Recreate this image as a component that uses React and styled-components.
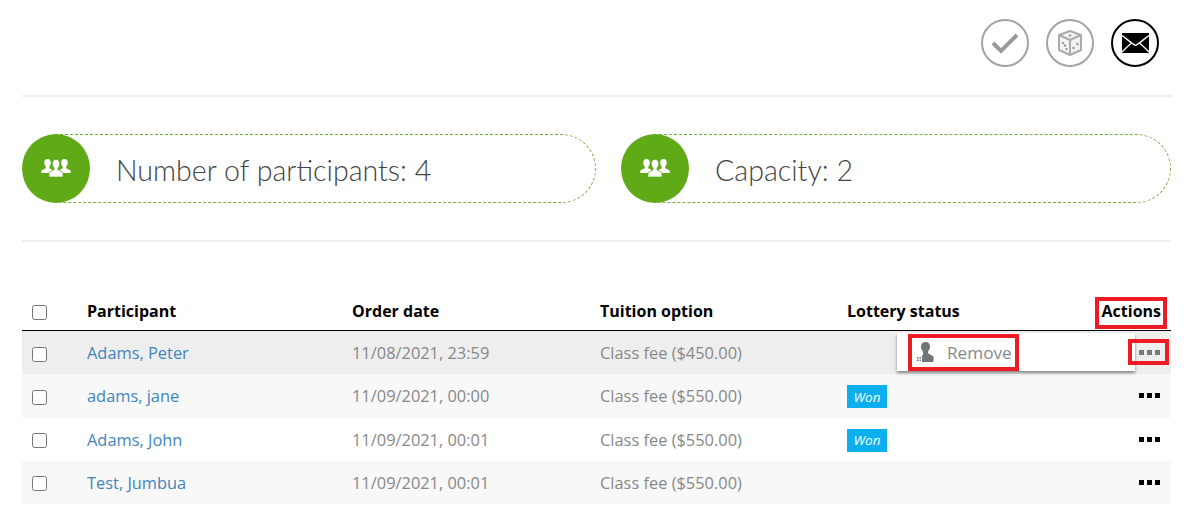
import React from "react";
import styled, { createGlobalStyle } from "styled-components";

const GlobalStyle = createGlobalStyle`
  html, body {
    margin: 0;
    background: #fff;
    font-family: "Open Sans", "Noto Sans", sans-serif;
  }
`;

const rows = [
  { name: "Adams, Peter", date: "11/08/2021, 23:59", fee: "Class fee ($450.00)", active: true },
  { name: "adams, jane", date: "11/09/2021, 00:00", fee: "Class fee ($550.00)", won: true },
  { name: "Adams, John", date: "11/09/2021, 00:01", fee: "Class fee ($550.00)", won: true },
  { name: "Test, Jumbua", date: "11/09/2021, 00:01", fee: "Class fee ($550.00)" },
];

const PeopleIcon = () => (
  <svg width="30" height="19" viewBox="0 0 30 19" fill="#fff">
    <path d="M6.500 0c2.300 0 3.300 1.600 3.300 3.800 0 1.500-.6 3-1.500 3.800v1.600l3 1.600V14H.3v-2.400l4.500-2.400V7.600C3.900 6.800 3.300 5.300 3.300 3.800 3.300 1.600 4.200 0 6.500 0z" />
    <path d="M23.500 0c-2.300 0-3.300 1.600-3.300 3.800 0 1.500.6 3 1.500 3.800v1.600l-3 1.600V14h11v-2.400l-4.500-2.400V7.600c.9-.8 1.500-2.300 1.500-3.800C26.700 1.600 25.800 0 23.500 0z" />
    <path d="M15 .5c2.500 0 3.700 1.800 3.700 4.200 0 1.700-.7 3.300-1.700 4.100v2l5 2.700V18H8v-4.500l5-2.700v-2c-1-.8-1.700-2.400-1.700-4.100C11.300 2.300 12.500.5 15 .5z" stroke="#60a917" strokeWidth=".7" />
  </svg>
);

const CheckIcon = () => (
  <svg width="28" height="22" viewBox="0 0 28 22" fill="none" stroke="#999" strokeWidth="4">
    <path d="M2 11l8 8L26 3" />
  </svg>
);

const DiceIcon = () => (
  <svg width="26" height="28" viewBox="0 0 26 28" fill="#fff" stroke="#aaa" strokeWidth="2" strokeLinejoin="round">
    <path d="M13 2l11 4v15l-11 5-11-5V6z" fill="#f3f3f3" />
    <path d="M2 6l11 5 11-5M13 11v15" fill="none" />
    <g fill="#999" stroke="none">
      <circle cx="13" cy="6.500" r="1.300" />
      <circle cx="6" cy="14" r="1.200" />
      <circle cx="9.500" cy="20" r="1.200" />
      <circle cx="8" cy="16.500" r="1.200" />
      <circle cx="16.500" cy="19" r="1.200" />
      <circle cx="20.500" cy="15" r="1.200" />
    </g>
  </svg>
);

const MailIcon = () => (
  <svg width="27" height="20" viewBox="0 0 27 20">
    <rect width="27" height="20" fill="#000" />
    <path d="M0 2.500C5 6 9 10 13.500 12.500 18 10 22 6 27 2.500M0 19c3-3 6-6 9-8.500M27 19c-3-3-6-6-9-8.500" fill="none" stroke="#fff" strokeWidth="1.400" />
  </svg>
);

const RemoveIcon = () => (
  <svg width="18" height="20" viewBox="0 0 18 20" fill="#6f7578">
    <path d="M9.500 0c3 0 4.500 2 4.500 4.800 0 2-1 3.700-2 4.700v1.700l5.500 3.300V20H3v-4.500l4-2.600V9.500C6 8.500 5 6.800 5 4.800 5 2 6.500 0 9.500 0z" />
    <rect x="0" y="14" width="6" height="6" fill="#fff" />
    <path d="M1 15h1.500v1.500H1zM3.500 15H5v1.500H3.500zM1 17.500h1.500V19H1zM3.500 17.500H5V19H3.500z" />
  </svg>
);

const App = () => (
  <Page>
    <GlobalStyle />
    <Toolbar>
      <RoundButton><CheckIcon /></RoundButton>
      <RoundButton><DiceIcon /></RoundButton>
      <RoundButton $active><MailIcon /></RoundButton>
    </Toolbar>

    <Stats>
      <Stat>
        <StatBadge><PeopleIcon /></StatBadge>
        <StatLabel>Number of participants: 4</StatLabel>
      </Stat>
      <Stat>
        <StatBadge><PeopleIcon /></StatBadge>
        <StatLabel>Capacity: 2</StatLabel>
      </Stat>
    </Stats>

    <Table>
      <HeadRow>
        <CheckCell><Box type="checkbox" /></CheckCell>
        <span>Participant</span>
        <span>Order date</span>
        <span>Tuition option</span>
        <span>Lottery status</span>
        <ActionsCell>
          <Marked $inset="-3px -6px -7px -7px">Actions</Marked>
        </ActionsCell>
      </HeadRow>
      {rows.map((row, i) => (
        <Row key={row.name + i} $index={i} $active={row.active}>
          <CheckCell><Box type="checkbox" /></CheckCell>
          <NameLink>{row.name}</NameLink>
          <span>{row.date}</span>
          <span>{row.fee}</span>
          <span>{row.won && <WonBadge>Won</WonBadge>}</span>
          <ActionsCell>
            {row.active && (
              <Menu>
                <Marked $inset="-7px -7px -7px -8px">
                  <MenuItem><RemoveIcon />Remove</MenuItem>
                </Marked>
              </Menu>
            )}
            {row.active ? (
              <Marked $inset="-11px -8px -10px -11px"><Dots $muted /></Marked>
            ) : (
              <Dots />
            )}
          </ActionsCell>
        </Row>
      ))}
    </Table>
  </Page>
);

export default App;

const Page = styled.div`
  width: 1149px;
  margin: 0 auto;
  padding-top: 19px;
  height: 491px;
  overflow: hidden;
`;

const Toolbar = styled.div`
  display: flex;
  justify-content: flex-end;
  gap: 17px;
  padding: 0 12px 28px 0;
  border-bottom: 2px solid #eee;
`;

const RoundButton = styled.div`
  width: 48px;
  height: 48px;
  box-sizing: border-box;
  border-radius: 50%;
  border: 2px solid ${(p) => (p.$active ? "#000" : "#a3a3a3")};
  display: flex;
  align-items: center;
  justify-content: center;
`;

const Stats = styled.div`
  display: grid;
  grid-template-columns: 574px 550px;
  column-gap: 25px;
  padding: 37px 0 37px;
  border-bottom: 2px solid #eee;
  margin-bottom: 54px;
`;

const Stat = styled.div`
  display: flex;
  align-items: center;
  position: relative;
  height: 69px;
`;

const StatBadge = styled.div`
  width: 68px;
  height: 69px;
  border-radius: 50%;
  background: #60a917;
  display: flex;
  align-items: center;
  justify-content: center;
  flex: none;
  position: relative;
  z-index: 1;
`;

const StatLabel = styled.div`
  flex: 1;
  height: 69px;
  box-sizing: border-box;
  margin-left: -30px;
  padding: 2px 0 0 56px;
  border: 1px dashed #76ab3f;
  border-left: none;
  border-radius: 0 36px 36px 0;
  display: flex;
  align-items: center;
  font-family: "Lato", sans-serif;
  font-weight: 300;
  font-size: 28.6px;
  color: #444;
`;

const Table = styled.div`
  font-size: 16.4px;
`;

const columns = `
  display: grid;
  grid-template-columns: 65px 265px 248px 247px 1fr 120px;
  align-items: center;
`;

const HeadRow = styled.div`
  ${columns}
  height: 35px;
  box-sizing: border-box;
  padding-bottom: 5px;
  font-size: 16px;
  font-weight: 700;
  color: #000;
  border-bottom: 1px solid #000;
`;

const Row = styled.div`
  ${columns}
  height: 43.25px;
  color: #888;
  background: ${(p) =>
    p.$active ? "#eee" : p.$index % 2 === 1 ? "#f8f8f8" : "#fff"};
`;

const CheckCell = styled.div`
  display: flex;
  padding-left: 10px;
`;

const Box = styled.input`
  width: 15px;
  height: 15px;
  margin: 3px 0 0;
`;

const NameLink = styled.a`
  color: #3f86bd;
`;

const WonBadge = styled.span`
  display: inline-flex;
  align-items: center;
  justify-content: center;
  width: 40px;
  height: 23px;
  background: #0cafee;
  color: #fff;
  font-size: 13.5px;
  font-style: italic;
  vertical-align: middle;
`;

const ActionsCell = styled.div`
  display: flex;
  justify-content: flex-end;
  align-items: center;
  padding-right: 10px;
  position: relative;
`;

const Marked = styled.span`
  position: relative;
  display: inline-flex;
  align-items: center;
  z-index: 3;

  &::after {
    content: "";
    position: absolute;
    inset: ${(p) => p.$inset};
    border: 4px solid #ed1c24;
    pointer-events: none;
  }
`;

const Dots = styled.span`
  display: block;
  width: 5px;
  height: 5px;
  margin-right: 17px;
  background: ${(p) => (p.$muted ? "#777" : "#000")};
  box-shadow:
    8px 0 0 ${(p) => (p.$muted ? "#777" : "#000")},
    16px 0 0 ${(p) => (p.$muted ? "#777" : "#000")};
`;

const Menu = styled.div`
  position: absolute;
  left: -154px;
  right: 36px;
  top: -17px;
  height: 38px;
  background: #fff;
  box-shadow: 0 2px 3px rgba(0, 0, 0, 0.45);
  display: flex;
  align-items: center;
  padding-left: 19px;
  z-index: 2;
`;

const MenuItem = styled.span`
  display: flex;
  align-items: center;
  gap: 13px;
  color: #888;
  font-size: 17.2px;
`;
